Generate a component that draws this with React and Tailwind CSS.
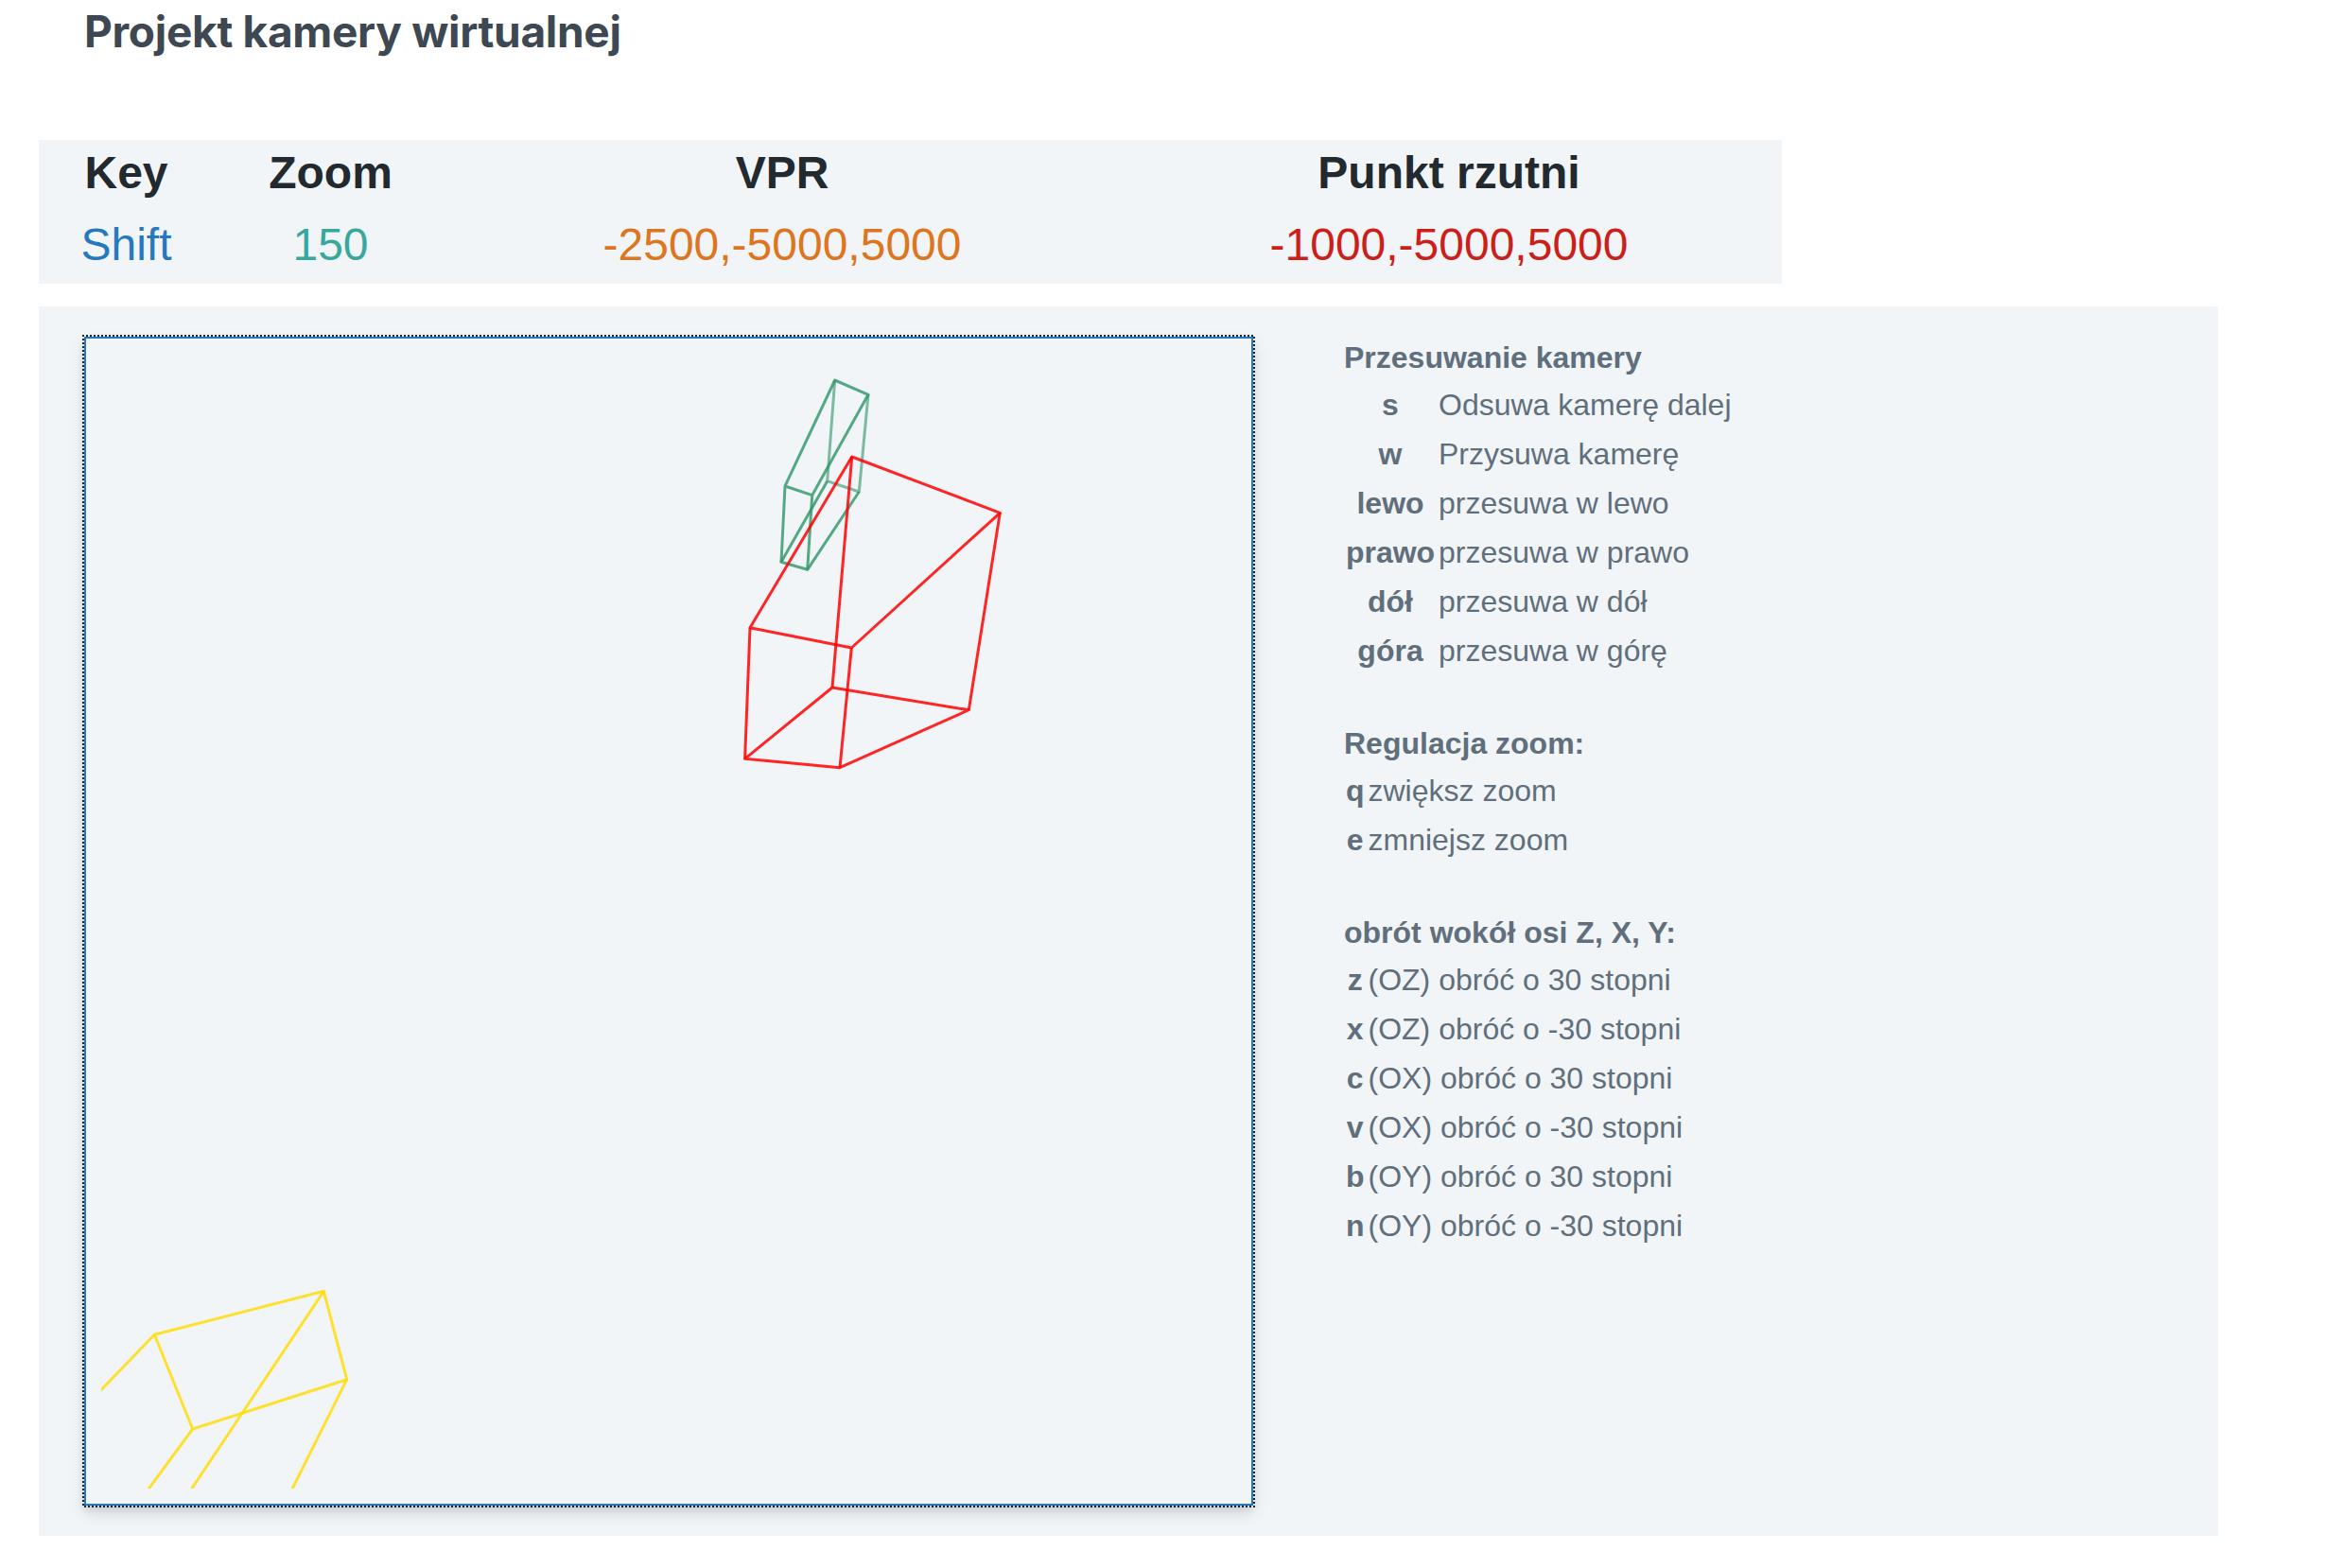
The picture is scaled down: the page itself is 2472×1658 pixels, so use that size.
const stats = [
  { label: 'Key', value: 'Shift', color: 'text-[#2779bd]' },
  { label: 'Zoom', value: '150', color: 'text-[#38a89d]' },
  { label: 'VPR', value: '-2500,-5000,5000', color: 'text-[#de751f]' },
  { label: 'Punkt rzutni', value: '-1000,-5000,5000', color: 'text-[#cc1f1a]' },
];

const sections = [
  {
    title: 'Przesuwanie kamery',
    keyWidth: 'w-[94px]',
    rows: [
      ['s', 'Odsuwa kamerę dalej'],
      ['w', 'Przysuwa kamerę'],
      ['lewo', 'przesuwa w lewo'],
      ['prawo', 'przesuwa w prawo'],
      ['dół', 'przesuwa w dół'],
      ['góra', 'przesuwa w górę'],
    ],
  },
  {
    title: 'Regulacja zoom:',
    keyWidth: 'w-[19.5px]',
    rows: [
      ['q', 'zwiększ zoom'],
      ['e', 'zmniejsz zoom'],
    ],
  },
  {
    title: 'obrót wokół osi Z, X, Y:',
    keyWidth: 'w-[19.5px]',
    rows: [
      ['z', '(OZ) obróć o 30 stopni'],
      ['x', '(OZ) obróć o -30 stopni'],
      ['c', '(OX) obróć o 30 stopni'],
      ['v', '(OX) obróć o -30 stopni'],
      ['b', '(OY) obróć o 30 stopni'],
      ['n', '(OY) obróć o -30 stopni'],
    ],
  },
];

function Scene() {
  return (
    <svg className="block h-[1200px] w-[1200px]" viewBox="107 374 1200 1200" fill="none" strokeWidth="3" strokeLinejoin="round">
      <g stroke="#2e9566" strokeOpacity="0.8">
        <path d="M874.7 508.7L826 594.3L853.7 602.3L908.3 520" />
        <path d="M882.7 402L918 417.3L858.7 523.7L830 514ZM830 514L826 594.3M858.7 523.7L853.7 602.3" />
        <path strokeOpacity="0.6" d="M882.7 402L874.7 508.7L908.3 520L918 417.3" />
      </g>
      <g stroke="#ff0000" strokeOpacity="0.85">
        <path d="M900.7 483L1057.3 542.3L900.3 685L793 663.7Z" />
        <path d="M880 727L1024.3 750.7L888 811.7L787.6 802.3Z" />
        <path d="M900.7 483L880 727M1057.3 542.3L1024.3 750.7M900.3 685L888 811.7M793 663.7L787.6 802.3" />
      </g>
      <g stroke="#ffdd00" strokeOpacity="0.82">
        <path d="M163.3 1411.3L342.3 1365.3L366.7 1458.7L203.7 1511Z" />
        <path d="M163.3 1411.3L103.3 1473.4M203.7 1511L154.7 1577.7M342.3 1365.3L200.3 1577.7M366.7 1458.7L307.3 1577.7" />
      </g>
    </svg>
  );
}

export default function App() {
  return (
    <div className="h-[1658px] w-[2472px] overflow-hidden bg-white pl-[41px] font-['Liberation_Sans',Arial,sans-serif] text-[#22292f]">
      <h1 className="h-[148px] pl-12 font-['Inter',sans-serif] text-[46px] leading-[66px] font-bold tracking-[-0.3px] text-[#3d4852]">
        Projekt kamery wirtualnej
      </h1>
      <div className="grid h-[152px] w-[1843px] grid-cols-[185px_247px_708px_702px] bg-[#f1f5f8] text-center text-5xl">
        {stats.map((s) => (
          <div key={s.label} className="flex flex-col">
            <span className="leading-[70px] font-bold">{s.label}</span>
            <span className={`leading-[82px] ${s.color}`}>{s.value}</span>
          </div>
        ))}
      </div>
      <div className="mt-6 flex h-[1300px] w-[2304px] items-start bg-[#f1f5f8] pt-[30px] pl-[46px]">
        <div className="bg-[repeating-conic-gradient(from_90deg,#22292f_0_25%,transparent_0_50%)] bg-[length:4px_4px] p-0.5">
          <div className="border-2 border-[#2779bd] bg-[#f1f5f8] p-4 shadow-[0_8px_16px_rgba(0,0,0,0.12),0_4px_8px_rgba(0,0,0,0.08)]">
            <Scene />
          </div>
        </div>
        <div className="mt-0.5 ml-[94px] flex flex-col gap-[50px] text-[32px] text-[#606f7b]">
          {sections.map((sec) => (
            <section key={sec.title}>
              <h2 className="h-[46px] leading-[44px] font-bold">{sec.title}</h2>
              {sec.rows.map(([k, text]) => (
                <div key={k} className="flex h-[52px] gap-1 pl-0.5 leading-[52px] whitespace-nowrap">
                  <b className={`flex justify-center ${sec.keyWidth}`}>{k}</b>
                  <span>{text}</span>
                </div>
              ))}
            </section>
          ))}
        </div>
      </div>
    </div>
  );
}
